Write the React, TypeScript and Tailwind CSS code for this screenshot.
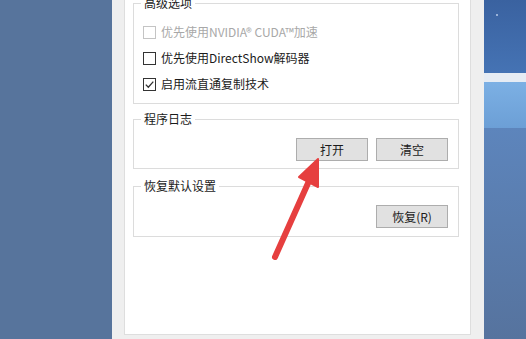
import React from "react";

const font = { fontFamily: '"Noto Sans CJK SC", "Noto Sans", sans-serif' };

// small win10 style checkbox
const CheckRow = ({
  label,
  checked = false,
  disabled = false,
}: {
  label: string;
  checked?: boolean;
  disabled?: boolean;
}) => (
  <div className="flex h-[26px] items-center gap-[5px] pl-[2px]">
    <span
      className={`flex h-[13px] w-[13px] shrink-0 items-center justify-center border bg-white ${
        disabled ? "border-[#c4c4c4]" : "border-[#333333]"
      }`}
    >
      {checked && (
        <svg width="11" height="11" viewBox="0 0 11 11">
          <path d="M1.8 5.6 L4.3 8.2 L9.3 2.6" fill="none" stroke="#333" strokeWidth="1.3" />
        </svg>
      )}
    </span>
    <span className={`text-[12px] leading-[16px] ${disabled ? "text-[#a8a8a8]" : "text-[#1b1b1b]"}`}>
      {label}
    </span>
  </div>
);

const Btn = ({ children }: { children: React.ReactNode }) => (
  <button className="flex h-[23px] w-[72px] items-center justify-center border border-[#adadad] bg-[#e1e1e1] text-[12px] leading-[16px] text-[#1b1b1b]">
    {children}
  </button>
);

const Group = ({
  title,
  className = "",
  children,
}: {
  title: string;
  className?: string;
  children: React.ReactNode;
}) => (
  <fieldset className={`border border-[#dcdcdc] pl-[7px] pr-[10px] ${className}`}>
    <legend className="px-[3px] text-[12px] leading-[16px] text-[#1b1b1b]">{title}</legend>
    {children}
  </fieldset>
);

export default function App() {
  return (
    <div className="relative flex h-[339px] w-[526px] overflow-hidden bg-[#57749c]" style={font}>
      <div className="w-[112px] shrink-0 bg-[#57749c]" />

      {/* settings window */}
      <div className="flex w-[372px] shrink-0 flex-col bg-[#efefef] pb-[4px] pl-[12px] pr-[13px]">
        <div className="flex flex-1 flex-col border-x border-b border-[#dedede] bg-white pl-[8px] pr-[11px]">
          <Group title="高级选项" className="-mt-[5px]">
            <div className="pb-[6px] pt-[8px]">
              <CheckRow label="优先使用NVIDIA® CUDA™加速" disabled />
              <CheckRow label="优先使用DirectShow解码器" />
              <CheckRow label="启用流直通复制技术" checked />
            </div>
          </Group>

          <Group title="程序日志" className="mt-[7px]">
            <div className="flex justify-end gap-[8px] pb-[7px] pt-[11px]">
              <Btn>打开</Btn>
              <Btn>清空</Btn>
            </div>
          </Group>

          <Group title="恢复默认设置" className="mt-[9px]">
            <div className="flex justify-end pb-[8px] pt-[11px]">
              <Btn>恢复(R)</Btn>
            </div>
          </Group>
        </div>
      </div>

      {/* desktop wallpaper peeking out */}
      <div className="flex w-[42px] shrink-0 flex-col">
        <div className="relative h-[73px] bg-gradient-to-b from-[#3a62a0] to-[#4573b4]">
          <span className="absolute left-[12px] top-[14px] h-[2px] w-[2px] rounded-full bg-[#b8cdea]" />
        </div>
        <div className="h-[9px] bg-[#e6ecf4]" />
        <div className="h-[46px] bg-gradient-to-b from-[#7cb0e4] to-[#6c9fd6]" />
        <div className="flex-1 bg-gradient-to-b from-[#5d85bc] to-[#56739e]" />
      </div>

      {/* annotation arrow */}
      <svg className="pointer-events-none absolute left-0 top-0" width="526" height="339">
        <line x1="275" y1="257" x2="309" y2="181" stroke="#e63f3f" strokeWidth="6" strokeLinecap="round" />
        <polygon points="318,159 318,187 299,177" fill="#e63f3f" stroke="#e63f3f" strokeWidth="2" strokeLinejoin="round" />
      </svg>
    </div>
  );
}
